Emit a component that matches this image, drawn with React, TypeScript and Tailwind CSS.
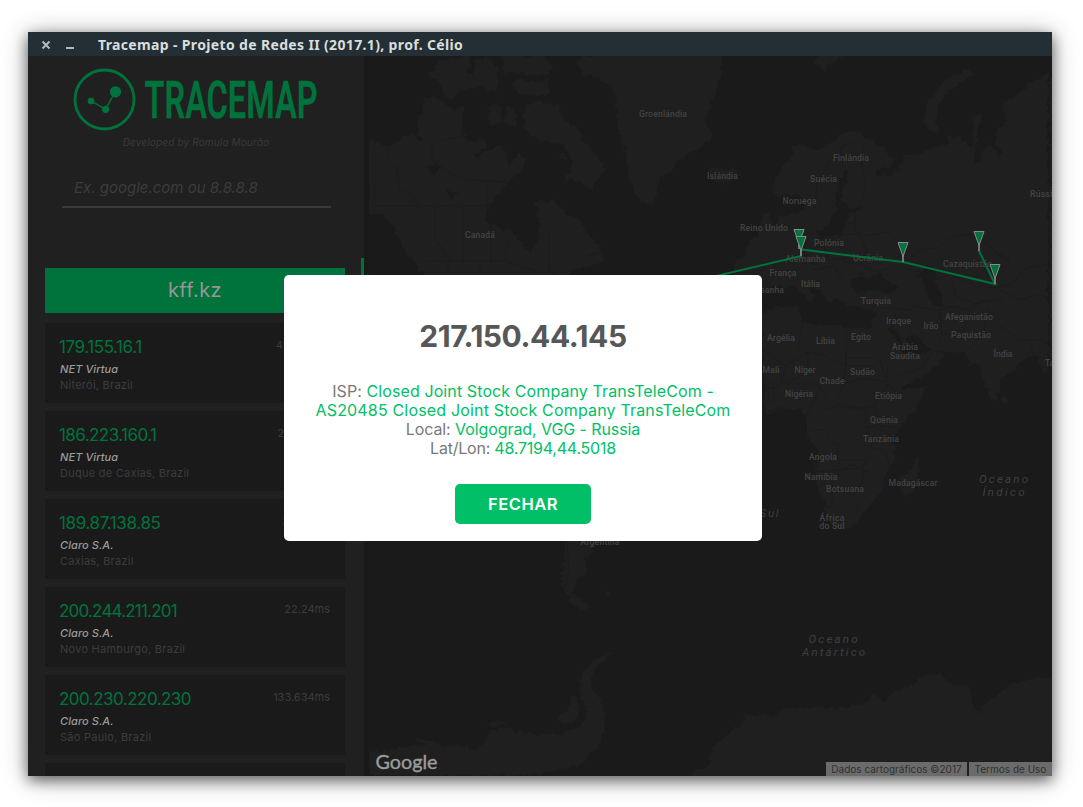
const sans = "font-['Inter','Liberation_Sans',sans-serif]";

const hops = [
  { ip: "179.155.16.1", isp: "NET Virtua", place: "Niterói, Brazil", ms: "406.114ms", fit: "tracking-[-0.42px]" },
  { ip: "186.223.160.1", isp: "NET Virtua", place: "Duque de Caxias, Brazil", ms: "20.848ms", fit: "tracking-[-0.56px]" },
  { ip: "189.87.138.85", isp: "Claro S.A.", place: "Caxias, Brazil", ms: "21.841ms", fit: "tracking-[-0.38px]" },
  { ip: "200.244.211.201", isp: "Claro S.A.", place: "Novo Hamburgo, Brazil", ms: "22.24ms", fit: "tracking-[-0.8px]" },
  { ip: "200.230.220.230", isp: "Claro S.A.", place: "São Paulo, Brazil", ms: "133.634ms", fit: "tracking-[-0.52px]" },
];

const labels: [string, number, number, number][] = [
  ["Groenlândia", 663, 117, 48],
  ["Islândia", 722.5, 179, 31],
  ["Finlândia", 851, 161, 36],
  ["Suécia", 823.5, 182, 27],
  ["Noruega", 799.5, 204, 34],
  ["Canadá", 480, 238, 30],
  ["Reino Unido", 764, 231, 48],
  ["Polónia", 829, 246, 30],
  ["Alemanha", 805.5, 262, 40],
  ["Ucrânia", 868, 261, 30],
  ["França", 783, 276, 27],
  ["Itália", 810.5, 287, 19],
  ["Espanha", 767, 293, 34],
  ["Cazaquistão", 967.5, 267, 49],
  ["Turquia", 876, 304, 30],
  ["Iraque", 898.5, 324, 25],
  ["Irão", 931, 329, 15],
  ["Afeganistão", 969, 320, 48],
  ["Paquistão", 971, 338, 40],
  ["Índia", 1003, 357, 19],
  ["Argélia", 781, 341, 28],
  ["Líbia", 825.5, 344, 19],
  ["Egito", 861, 340, 20],
  ["Arábia", 905, 350, 26],
  ["Saudita", 905, 359, 30],
  ["Mali", 771, 373, 17],
  ["Níger", 805, 373, 21],
  ["Sudão", 862.5, 375, 25],
  ["Chade", 832, 384, 25],
  ["Nigéria", 799, 397, 28],
  ["Etiópia", 888.5, 399, 27],
  ["Quênia", 884, 423, 28],
  ["Tanzânia", 881, 442, 36],
  ["Angola", 823, 460, 28],
  ["Namíbia", 821, 480, 33],
  ["Botsuana", 845, 492, 38],
  ["Madagáscar", 913, 486, 49],
  ["África", 832, 521, 25],
  ["do Sul", 832, 529, 25],
  ["Argentina", 600, 545, 39],
];

const land = [
  // North America
  "M369 138l13 7 10 1 8-8 12-5 8 8 12-3 10 6 10 8 12-4 12 8 14-5 10-6 6 5 4 15 9-12 6 10-8 12-12 9-5 10-12 10-2 16 14 8 13 4 10 14 8 8 7-15v-24l-3-13 20-1 12 14 12 4 8 14 12 12 5 16-14 6-16 2-12 14-10 14H424v-20l-10-14-10-14-12-24-12-10-11-2z",
  // Arctic islands
  "M424 98l10-1 12 8 9 6 8-6v30l10 8 12-5 2 10-12 6-16 5-14-3-12-10-14-8-2-18 7-12z",
  "M428 75l14-15 20-4h10l-4 16 8 6 8-8 6 6-14 12-16 4-8 8-10-8-4-12z",
  "M475 60l12-4 12 12-2 22-10 4-8-14-6-6z",
  "M502 56h40l10 10-2 8-20 2-16-4-10 4z",
  "M515 78l18 4 14-2 4 12-12 4-20-2-6-6z",
  "M489 104l12 2 2 14-10 6-6-10zM508 104l8 8-2 16-10-6z",
  "M525 106l12-4 20 2 6 14 14 10 8 14 10 12 12 14-10 10-4 12-12-8-16-2 8-20-10-16-16-2-16-6-8-14z",
  "M558 154l6-3 4 8-8 2z",
  "M580 56h8l-4 10zM598 56h124l-2 22-8 22-7 20 7 16-12 12-15 7-15 15-10 10-5 20-5 6-15-11-8-25-2-20-7-20-1-20-5-22-12-10-15-3-8-14z",
  // Iceland, Svalbard, Novaya Zemlya
  "M707 170l6-4 8 4 10-3 7 4-2 6-12 8-12-4z",
  "M815 60l6-4h24l-14 7-7 10zM970 68l3 7-15 10-12 9-8 12-3 15 4 11-9-1-6-9 3-17 7-12 10-13 15-7z",
  // Eurasia
  "M820 150l15-10 10-8 15 0 10 8 15 8 8 12-5 8-13 0 5 9 12-2 8-7 3-13 10-1 20-6 15-5-2-10 12 5 14 10 1-30 8-5 2 32 10 0 5-15 8-12-3-14 18-12 10-10 17-9v297l-5 4-6-18-10 1-10 10-16 13-3 17-6 5-10-23-4-16-8 1-6-11-20-1-17-4-10-13-10 2 6 10 10 6 10-4 12 6-8 11-17 12-20 10-8-10-8-24-10-20-4-18-26 4-10-12-10-4-8-8-8 12-10-12-18-12-18 6-12 10-16 2v-40l18-12 10-16 12-6 4-12 12-2 14-4-2-12-12-4-12 4-6-8 4-14 14-18 4-14z",
  "M750 244l8-12 6-18 6-2 2 12 10 8-2 14-16 6zM748 244l8-2-2 14-8 2z",
  // Africa
  "M762 312l18-5 20-1 5 12 15 7 20 0 15 3 18 1 7 14 8 18 11 24 7 5 19-3-6 18-17 20-10 14 4 20-11 16-4 16-14 18-12 16-14 4-10-5-6-20-9-20-1-15 2-20-10-15v-18l-8-8-16 1-18 4z",
  "M917 456l3 9-8 28-8 3-4-8 2-10 9-8zM1004 394l4 5-2 5-4-3z",
  // South America
  "M568 535l-5 28-2 20 7 15 12 13 10-3-8-8-10-5 6-15 10-8-4-12 8-8 8-17zM604 592l8 0-4 4z",
  // Antarctica
  "M369 751l20-1 10-3 25-1 8-6 10 8 15-4 20 6 11-12 2-8 18-2 12 4 16 4 12-2 12 0 22-9 5-12-6-14-2-18 10-16 16-12 12-6-10 10-12 13-4 10 2 12 8 8 4 12-1 20-6 14-12 14-10 6-44 9H369z",
  "M415 736l8 4 12 0-4 4-12-1zM485 723l16-2 8 4-16 2zM574 695l6 14-2 12-14 4-6-6 8-8z",
  "M688 776l22-11 2-17 18-16 15-10-2-8 12 2 10-1 10 2 10-10 45 0 15 1 25-8 2-7 13 9 7-9 23-11 15-9 10 2 10 8 23 4-1 16 6 12 7-12 15-11 15-9 25-6 12 0v99z",
];

const seas = [
  "M846 168l2 10-6 12-2 10 10 8 14-3-4 5-10 3-4 10-6 12-12 3-10-2-6-10 6 6 8-4 4-10 6-8 0-14z",
  "M762 298l16-4 6-6 12-2 8 8 8 8 2-6-8-10 6-4 12 14 8 8 4-6 14 8 18 4 8 2-4 10-24 0-24 4-20-4-8-16-22-2-12 4z",
  "M850 280l12-6 8 4 10-6 4 6 14 10-8 6-18-3-16 2z",
  "M918 274l10-8 8 4-2 12 8 14 2 10-10 0-6-10-4-12zM890 330l3-2 12 16 16 6-4 6-14-4z",
  "M981 118l4 26-6 18-6 2 4-20zM992 142l10 8-4 10zM426 168l12-6 4 4-8 10zM446 190l14 2-10 8zM536 222l4 0-2 10z",
];

const borders =
  "M369 206h137M388 142v20l8 4 4 24 10 4 10 14M432 140v20l16 12 20 8 40 2M487 182v24l4 20v38M435 206v32l16 24M463 206v56M426 261h80l10 4 20 6M506 262v-18l20-22M549 230v40l8 6M595 208l-2 30 24 10-30 8M448 262v20M480 262v14M520 270v10M375 140v64M463 112v24l-20 4" +
  "M815 208l2-24 14-24 14-16M843 168l-2-20 14-6M863 146l-1 20 4 20-6 18M856 210l-2 20 12 6 22-4 10 12M840 225l20-4M836 234l24 0 6 16-4 14 14 8 14-4M784 258l10 8 4 14M806 240l-2 20 16 6M822 240l6 20 22-2M812 270l22-4 8 14M842 260l20 6M912 256l8-6 18-2 10-10 20-4 12 4 16 14 14 6M912 256l-2 14 20 4M934 280l16-6 26 12 18 2 18-4 14-16 24-4M950 274l6 22 20 8 26-6M1010 262l-16-10M1000 290l20 10 20-6 12 6" +
  "M878 308l14 0 20 2M892 308l6 14-12 10M898 308l12 12 0 14M912 306l26 4 16-4M940 312l2 22-6 12M950 306l18 4 16-10 20 2M942 334l20 0 6-16 20-10M988 308l-4 24-16 18M1000 326l20 14 22 0M1030 342l4 14M1042 340l10 8" +
  "M806 308l-4 16-4 26M762 350l24 16 22-14 18 4 20 10M846 326v32h28M846 358l-2 26-8 18M786 366l-6 20-18 4M808 352l0 18-22 14M786 384l32 0 10 14M820 386l-4 12-10 18M774 386l0 18M762 384l16 0M768 386v18M846 356v10h30M844 384l20-6 22 4 2-16M836 402l20 6 18-2 14-22 20 20M888 384l-8 18M874 406l6 20 18 2M822 410l16-4 28 4 2 18-4 20M810 430l14 0 6 12 8 2 0 16 28 0M864 428l10-2 24 14M862 444l24 8 4 16M812 472l26-2 0 6-6 2v28l-10 2M838 470l24-2 6-10M838 476l12-12 14 6-2 14-14 8-12-4M862 470l8 2M856 506l4-2 0 5-4 2zM880 360l6 20 10 14M898 376l24-8 10-16M567 541l2 30-4 18 10 10";

const markers: [number, number][] = [
  [799, 229.5],
  [801, 236.5],
  [903, 242.5],
  [979, 231.5],
  [995, 264.5],
];

const oceans: [string, number, number, number][] = [
  ["Oceano", 1003.5, 483, 49],
  ["Índico", 1003.5, 496, 42],
  ["Oceano", 833, 643, 49],
  ["Antártico", 833.5, 656, 63],
  ["Sul", 769, 517, 19],
];

function WorldMap() {
  return (
    <svg className="block h-[720px] w-[688px]" viewBox="364 56 688 720">
      <defs>
        <filter id="coast" x="0" y="0" width="100%" height="100%" colorInterpolationFilters="sRGB">
          <feTurbulence type="fractalNoise" baseFrequency="0.16" numOctaves="3" seed="4" result="n" />
          <feDisplacementMap in="SourceGraphic" in2="n" scale="8" xChannelSelector="R" yChannelSelector="G" />
        </filter>
      </defs>
      <rect x="364" y="56" width="688" height="720" fill="#1a1a1a" />
      <g filter="url(#coast)">
        <rect x="364" y="40" width="700" height="750" fill="#1a1a1a" />
        <path d="M598 46h124v14H598z" fill="#1f1f1f" />
        <path d={land.join("")} fill="#1f1f1f" />
        <path d={seas.join("")} fill="#1a1a1a" />
        <path d="M1050 78h14v280h-14zM1050 680h14v100H700v-6h350z" fill="#1f1f1f" />
      </g>
      <path d={borders} fill="none" stroke="#1b1b1b" strokeWidth="0.9" />
      <rect x="364" y="56" width="5" height="720" fill="#191919" />
      <g className="font-['Roboto',sans-serif] font-medium" fontSize="8.6" fill="#434343" textAnchor="middle">
        {labels.map(([t, x, y, w]) => (
          <text key={t} x={x} y={y} textLength={w}>
            {t}
          </text>
        ))}
        <text x="1030" y="197" textLength="27" textAnchor="start">
          Rússia
        </text>
        <text x="1045" y="366" textLength="34" textAnchor="start">
          Tailândia
        </text>
      </g>
      <g className="font-['Roboto',sans-serif] italic" fontSize="11.5" fill="#3f3f3f" textAnchor="middle">
        {oceans.map(([t, x, y, w]) => (
          <text key={t + y} x={x} y={y} textLength={w}>
            {t}
          </text>
        ))}
      </g>
      <path d="M716 276L801 256V249.5L903 262L995 284L979 251" fill="none" stroke="#00733d" strokeWidth="2" />
      {markers.map(([x, y]) => (
        <g key={x}>
          <path d={`M${x} ${y + 10}V${y + 19.5}`} stroke="#8a8a8a" strokeWidth="1.6" />
          <path d={`M${x - 5} ${y}H${x + 5}L${x} ${y + 14}Z`} fill="#00733d" stroke="#8a8a8a" strokeWidth="1" />
        </g>
      ))}
      <text
        x="375.5"
        y="768.5"
        textLength="62"
        lengthAdjust="spacingAndGlyphs"
        fontSize="20"
        fill="#9b9b9b"
        stroke="#9b9b9b"
        strokeWidth="0.4"
        className="font-['Lato',sans-serif] font-normal"
      >
        Google
      </text>
    </svg>
  );
}

function Logo() {
  return (
    <svg className="block h-[64px] w-[246px] overflow-visible" viewBox="73 68 246 64">
      <circle cx="104.5" cy="99.5" r="29.5" fill="none" stroke="#00733d" strokeWidth="2.8" />
      <path d="M91 101l14.500 8.200L115.500 91.500" fill="none" stroke="#00733d" strokeWidth="1.400" />
      <circle cx="91" cy="101" r="3.300" fill="#00733d" />
      <circle cx="105.600" cy="109.300" r="3.600" fill="#00733d" />
      <circle cx="115.500" cy="91.800" r="5.600" fill="#00733d" />
      <text
        x="144.5"
        y="118"
        fontSize="52"
        textLength="173"
        lengthAdjust="spacingAndGlyphs"
        fill="#00733d"
        stroke="#00733d"
        strokeWidth="0.3"
        className="font-['Roboto',sans-serif] font-semibold"
      >
        TRACEMAP
      </text>
    </svg>
  );
}

function Sidebar() {
  return (
    <aside className="relative flex h-[720px] w-[336px] shrink-0 flex-col overflow-hidden bg-[#202020] px-[17px] pt-3">
      <div className="pl-7">
        <Logo />
      </div>
      <p className="mt-[2px] text-center text-[10px] italic leading-4 tracking-[0.15px] text-[#3a3a3a]">Developed by Romulo Mourão</p>
      <div className="ml-[17px] mt-[18px] h-[40px] w-[269px] border-b-2 border-[#3a3a3a] pl-3 text-[15px] italic leading-[40px] text-[#3c3c3c]">
        Ex. google.com ou 8.8.8.8
      </div>
      <div className="mt-[60px] h-[45px] w-[300px] shrink-0 bg-[#00733d] text-center text-[20px] leading-[45px] tracking-[0.4px] text-[#979797]">
        kff.kz
      </div>
      <div className="mt-[10px] flex w-[300px] flex-col gap-2">
        {hops.map((h) => (
          <div key={h.ip} className="flex h-[80px] shrink-0 justify-between bg-[#1a1a1a] pl-[14px] pr-[15px] pt-[14px]">
            <div>
              <div className={`text-[17px] leading-5 text-[#00733d] ${h.fit}`}>{h.ip}</div>
              <div className="mt-1 pl-px text-[11px] font-medium italic leading-4 tracking-[0.08px] text-[#9a9a9a]">{h.isp}</div>
              <div className="pl-px text-[11px] leading-4 tracking-[0.25px] text-[#3c3c3c]">{h.place}</div>
            </div>
            <div className="text-[11px] leading-4 text-[#3c3c3c]">{h.ms}</div>
          </div>
        ))}
        <div className="h-[80px] shrink-0 bg-[#1a1a1a]" />
      </div>
      <div className="absolute right-0 top-[202px] h-[200px] w-[3px] bg-[#00733d]" />
    </aside>
  );
}

function Dialog() {
  return (
    <div className="absolute left-[256px] top-[243px] flex h-[266px] w-[478px] flex-col items-center rounded-[5px] bg-white">
      <h2 className="mt-[41px] text-[30px] font-bold leading-10 tracking-[-0.45px] text-[#575757]">217.150.44.145</h2>
      <div className="mt-[26px] whitespace-nowrap text-center text-[16px] leading-[19px] text-[#00bf66]">
        <p className="tracking-[0.1px]">
          <span className="text-[#797979]">ISP:</span> Closed Joint Stock Company TransTeleCom -
        </p>
        <p className="tracking-[0.17px]">AS20485 Closed Joint Stock Company TransTeleCom</p>
        <p className="tracking-[-0.08px]">
          <span className="text-[#797979]">Local:</span> Volgograd, VGG - Russia
        </p>
        <p className="tracking-[-0.22px]">
          <span className="text-[#797979]">Lat/Lon:</span> 48.7194,44.5018
        </p>
      </div>
      <button className="mt-[26px] h-[40px] w-[136px] rounded-[5px] bg-[#00bf66] text-[16.5px] font-semibold tracking-[0.5px] text-white">FECHAR</button>
    </div>
  );
}

export default function App() {
  return (
    <div className={`h-[807px] w-[1083px] overflow-hidden bg-white pl-[28px] pt-[32px] ${sans}`}>
      <div className="relative h-[744px] w-[1024px] bg-[#1a1a1a] shadow-[0_4px_14px_rgba(0,0,0,0.6),0_2px_28px_rgba(0,0,0,0.2)]">
        <header className="flex h-6 items-center bg-[#232f34] font-['Noto_Sans',sans-serif]">
          <svg className="ml-[12px] h-6 w-[36px]" viewBox="0 0 36 24">
            <path d="M2.500 9.500l7 7m0-7l-7 7" stroke="#b4babc" strokeWidth="2" />
            <path d="M26 16h8" stroke="#b4babc" strokeWidth="2" />
          </svg>
          <span className="ml-[22px] whitespace-nowrap pt-[2px] text-[14px] font-bold leading-6 tracking-[0.35px] text-[#dadddd]">
            Tracemap - Projeto de Redes II (2017.1), prof. Célio
          </span>
        </header>
        <div className="flex h-[720px]">
          <Sidebar />
          <main className="relative w-[688px] overflow-hidden">
            <WorldMap />
            <div className="absolute bottom-0 right-0 flex h-[14px] gap-[2px] whitespace-nowrap text-[10px] leading-[15px] text-[#303030]">
              <span className="w-[141px] bg-[#6b6b6b] text-center">Dados cartográficos ©2017</span>
              <span className="w-[83px] bg-[#6b6b6b] text-center">Termos de Uso</span>
            </div>
          </main>
        </div>
        <Dialog />
      </div>
    </div>
  );
}
